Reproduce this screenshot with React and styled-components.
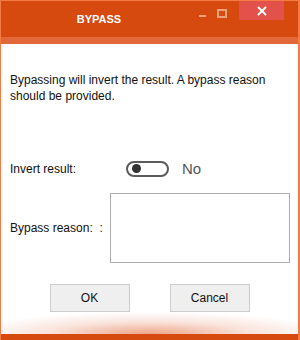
import { createGlobalStyle, styled } from "styled-components"

const GlobalStyle = createGlobalStyle`
  html, body {
    margin: 0;
    padding: 0;
    background: #ffffff;
  }
  * {
    box-sizing: border-box;
  }
`

function App() {
  return (
    <>
      <GlobalStyle />
      <Window>
        <TitleBar>
          <Title>BYPASS</Title>
          <Controls>
            <ControlButton>
              <MinimizeGlyph />
            </ControlButton>
            <ControlButton>
              <MaximizeGlyph />
            </ControlButton>
            <CloseButton>
              <svg width="10" height="10" viewBox="0 0 10 10">
                <path d="M1 1 L9 9 M9 1 L1 9" stroke="#ffffff" strokeWidth="2" />
              </svg>
            </CloseButton>
          </Controls>
        </TitleBar>
        <Strip />
        <Body>
          <Message>
            Bypassing will invert the result. A bypass reason should be provided.
          </Message>
          <InvertRow>
            <Label width={116}>Invert result:</Label>
            <Toggle>
              <Knob />
            </Toggle>
            <ToggleText>No</ToggleText>
          </InvertRow>
          <ReasonRow>
            <Label width={100}>Bypass reason:&nbsp;&nbsp;:</Label>
            <ReasonBox />
          </ReasonRow>
          <ButtonRow>
            <DialogButton>OK</DialogButton>
            <DialogButton>Cancel</DialogButton>
          </ButtonRow>
          <Glow />
        </Body>
        <BottomBar />
      </Window>
    </>
  )
}

export default App

const Window = styled.div`
  display: flex;
  flex-direction: column;
  width: 300px;
  height: 340px;
  border-top: 1px solid #f57a44;
  border-left: 1px solid #f57a44;
  border-right: 2px solid #f57a44;
  background: #ffffff;
  font-family: "Liberation Sans", Arial, sans-serif;
`

const TitleBar = styled.div`
  display: flex;
  align-items: flex-start;
  height: 36px;
  background: #d6490f;
`

const Title = styled.div`
  flex: 1;
  height: 35px;
  display: flex;
  align-items: center;
  justify-content: center;
  padding-left: 4px;
  color: #ffffff;
  font-size: 11px;
  font-weight: bold;
`

const Controls = styled.div`
  display: flex;
  align-items: flex-start;
  padding-right: 14px;
`

const ControlButton = styled.div`
  display: flex;
  align-items: center;
  justify-content: center;
  width: 19px;
  height: 22px;
`

const MinimizeGlyph = styled.div`
  width: 7px;
  height: 2px;
  margin-top: 8px;
  background: #eea07c;
`

const MaximizeGlyph = styled.div`
  width: 10px;
  height: 9px;
  margin-top: 3px;
  border: 2px solid #eea07c;
`

const CloseButton = styled.div`
  display: flex;
  align-items: center;
  justify-content: center;
  width: 45px;
  height: 19px;
  margin-left: 8px;
  background: #e2524a;
`

const Strip = styled.div`
  height: 7px;
  background: #e2683a;
`

const Body = styled.div`
  flex: 1;
  display: flex;
  flex-direction: column;
  padding: 0 0 0 9px;
  color: #111111;
  font-size: 12px;
`

const Message = styled.div`
  margin-top: 28px;
  width: 270px;
  line-height: 16px;
`

const InvertRow = styled.div`
  display: flex;
  align-items: center;
  height: 17px;
  margin-top: 56px;
`

const Label = styled.div`
  width: ${props => props.width}px;
  flex-shrink: 0;
`

const Toggle = styled.div`
  display: flex;
  align-items: center;
  width: 43px;
  height: 16px;
  padding-left: 4px;
  border: 2px solid #5b5b5b;
  border-radius: 8px;
`

const Knob = styled.div`
  width: 9px;
  height: 9px;
  border-radius: 50%;
  background: #333333;
`

const ToggleText = styled.div`
  margin-left: 13px;
  color: #555555;
  font-size: 15px;
`

const ReasonRow = styled.div`
  display: flex;
  align-items: center;
  margin-top: 16px;
`

const ReasonBox = styled.div`
  width: 180px;
  height: 70px;
  border: 1px solid #acacac;
`

const ButtonRow = styled.div`
  display: flex;
  justify-content: center;
  gap: 40px;
  margin-top: 21px;
  margin-left: -9px;
`

const DialogButton = styled.div`
  display: flex;
  align-items: center;
  justify-content: center;
  width: 80px;
  height: 28px;
  border: 1px solid #cccccc;
  background: #efefef;
  color: #111111;
  font-size: 12px;
`

const Glow = styled.div`
  flex: 1;
  margin-left: -9px;
  background: radial-gradient(ellipse 62% 100% at 50% 100%, rgba(226, 104, 58, 0.6), rgba(226, 104, 58, 0.18) 55%, rgba(255, 255, 255, 0) 100%);
`

const BottomBar = styled.div`
  height: 6px;
  background: #d6490f;
`
